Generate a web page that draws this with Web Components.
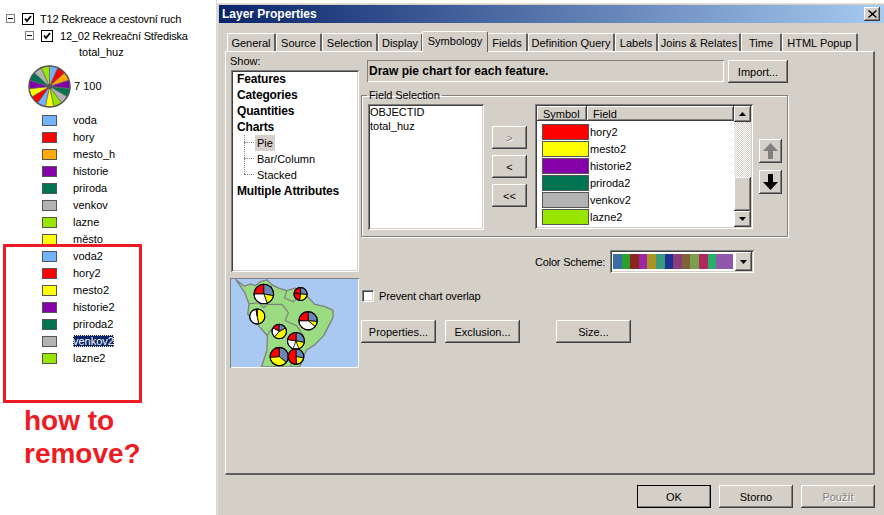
<!DOCTYPE html>
<html>
<head>
<meta charset="utf-8">
<title>Layer Properties</title>
<style>
  html, body { margin: 0; padding: 0; background: #fff; }
  body {
    display: flex;
    width: 884px;
    height: 515px;
    overflow: hidden;
    font: 11px "Liberation Sans", Arial, sans-serif;
    color: #000;
  }
</style>
</head>
<body>
<toc-panel>
  <tree-row depth="0" label="T12 Rekreace a cestovní ruch"></tree-row>
  <tree-row depth="1" label="12_02 Rekreační Střediska"></tree-row>
  <div style="height:17px;line-height:17px;padding-left:79px">total_huz</div>
  <pie-legend label="7 100"></pie-legend>
  <legend-row color="#73b2ff">voda</legend-row>
  <legend-row color="#ff0000">hory</legend-row>
  <legend-row color="#ffaa00">mesto_h</legend-row>
  <legend-row color="#8400a8">historie</legend-row>
  <legend-row color="#007350">priroda</legend-row>
  <legend-row color="#b2b2b2">venkov</legend-row>
  <legend-row color="#98e600">lazne</legend-row>
  <legend-row color="#ffff00">město</legend-row>
  <legend-row color="#73b2ff">voda2</legend-row>
  <legend-row color="#ff0000">hory2</legend-row>
  <legend-row color="#ffff00">mesto2</legend-row>
  <legend-row color="#8400a8">historie2</legend-row>
  <legend-row color="#007350">priroda2</legend-row>
  <legend-row color="#b2b2b2" selected>venkov2</legend-row>
  <legend-row color="#98e600">lazne2</legend-row>
  <red-note slot="note"></red-note>
</toc-panel>
<layer-dialog></layer-dialog>

<script>
const bevel = `
  box-shadow: inset -1px -1px #404040, inset 1px 1px #fff, inset -2px -2px #808080, inset 2px 2px #d4d0c8;
  background: #d4d0c8;`;
const sunken = `
  box-shadow: inset 1px 1px #808080, inset -1px -1px #fff, inset 2px 2px #404040, inset -2px -2px #d4d0c8;`;

function define(name, html, init) {
  const tpl = document.createElement('template');
  tpl.innerHTML = html;
  customElements.define(name, class extends HTMLElement {
    constructor() {
      super();
      this.attachShadow({ mode: 'open' });
      this.shadowRoot.appendChild(tpl.content.cloneNode(true));
    }
    connectedCallback() {
      if (init) init(this, this.shadowRoot);
    }
  });
}

/* ---- left table of contents ---- */
define('toc-panel', `
<style>
  :host { display: block; position: relative; width: 217px; height: 515px; flex: none;
          box-sizing: border-box; padding-top: 10px; border-right: 1px solid #d8d8d8; }
</style>
<slot></slot>
<slot name="note"></slot>`);

define('tree-row', `
<style>
  :host { display: flex; align-items: center; height: 17px; letter-spacing: -.2px; }
  .tog { width: 7px; height: 7px; border: 1px solid #808080; display: flex; align-items: center;
         justify-content: center; margin-right: 7px; flex: none; }
  .tog i { width: 5px; height: 1px; background: #000; }
  .chk { width: 10px; height: 10px; border: 1px solid #000; margin-right: 6px; flex: none; }
  .chk svg { display: block; }
</style>
<span class="tog"><i></i></span>
<span class="chk"><svg width="10" height="10" viewBox="0 0 10 10"><path d="M2 4.5 4 7 8 2" fill="none" stroke="#000" stroke-width="1.8"/></svg></span>
<span class="txt"></span>`, (el, root) => {
  root.querySelector('.txt').textContent = el.getAttribute('label');
  const d = el.getAttribute('depth') === '1';
  el.style.paddingLeft = d ? '25px' : '6px';
  if (d) root.querySelector('.chk').style.marginRight = '7px';
});

define('pie-legend', `
<style>
  :host { display: flex; align-items: center; height: 51px; padding-left: 28px; }
  svg { display: block; margin-right: 3px; }
  .txt { margin-bottom: 2px; }
</style>
<svg width="43" height="43" viewBox="-21.5 -21.5 43 43"></svg>
<span class="txt"></span>`, (el, root) => {
  root.querySelector('.txt').textContent = el.getAttribute('label');
  const cols = ['#73b2ff','#ff0000','#ffaa00','#8400a8','#007350','#b2b2b2','#98e600','#ffff00',
                '#73b2ff','#ff0000','#ffff00','#8400a8','#007350','#b2b2b2','#98e600'];
  const r = 20.5;
  let s = '';
  cols.forEach((c, i) => {
    const a0 = i * 24 * Math.PI / 180, a1 = (i + 1) * 24 * Math.PI / 180;
    s += `<path d="M0 0L${(r * Math.sin(a0)).toFixed(2)} ${(-r * Math.cos(a0)).toFixed(2)}A${r} ${r} 0 0 1 ${(r * Math.sin(a1)).toFixed(2)} ${(-r * Math.cos(a1)).toFixed(2)}Z" fill="${c}" stroke="#666" stroke-width=".7"/>`;
  });
  s += `<circle r="${r}" fill="none" stroke="#555" stroke-width="1.4"/><circle r="2.6" fill="#555"/>`;
  root.querySelector('svg').innerHTML = s;
});

define('legend-row', `
<style>
  :host { display: flex; align-items: center; height: 17px; padding-left: 42px; }
  .sw { width: 13px; height: 9px; border: 1px solid #555; margin-right: 16px; flex: none; }
  .t { margin-bottom: 2px; }
  :host([selected]) .t { background: #0a246a; color: #fff; outline: 1px dotted #ffe9a8; outline-offset: -1px; }
</style>
<span class="sw"></span><span class="t"><slot></slot></span>`, (el, root) => {
  root.querySelector('.sw').style.background = el.getAttribute('color');
});

define('red-note', `
<style>
  :host { position: absolute; left: 3px; top: 244px; display: flex; flex-direction: column; }
  .box { width: 133px; height: 153px; border: 3px solid #ed1c24; }
  .say { margin: 1px 0 0 21px; color: #ed1c24; font: bold 28px/33px "Liberation Sans", Arial, sans-serif; }
</style>
<div class="box"></div>
<div class="say">how to<br>remove?</div>`);

/* ---- small win32 controls ---- */
define('win-button', `
<style>
  :host { display: flex; align-items: center; justify-content: center; box-sizing: border-box; flex: none;
          ${bevel} height: 23px; width: 75px; }
  :host([disabled]) { color: #808080; text-shadow: 1px 1px #fff; }
  :host([default]) { outline: 1px solid #000; outline-offset: -1px; }
</style>
<slot></slot>`);

define('dlg-tab', `
<style>
  :host { display: flex; align-items: center; justify-content: center; box-sizing: border-box; flex: none;
          height: 18px; background: #d4d0c8; border: 1px solid #fff; border-bottom: 0;
          border-right: 2px solid #606060; border-radius: 2px 2px 0 0; }
  :host([active]) { height: 21px; margin: 0 -1px -1px -1px; padding-bottom: 2px; position: relative; z-index: 1;
          border-right: 1px solid #606060; }
</style>
<slot></slot>`);

define('show-list', `
<style>
  :host { display: block; box-sizing: border-box; width: 128px; height: 202px; margin-left: 1px; background: #fff;
          ${sunken} padding: 1px 0 0 6px; }
  div { height: 16px; line-height: 16px; }
  .h { font-weight: bold; font-size: 12px; letter-spacing: -.15px; }
  .s { display: flex; padding-left: 7px; background: repeating-linear-gradient(#808080 0 1px, transparent 1px 2px) 7px 0/1px 100% no-repeat; }
  .s.end { background-size: 1px 8px; }
  .s::before { content: ""; width: 10px; height: 8px; flex: none; border-bottom: 1px dotted #808080; box-sizing: border-box; margin-right: 1px; }
  .s span { padding: 0 2px; }
  .on span { background: #d4d0c8; }
</style>
<div class="h">Features</div>
<div class="h">Categories</div>
<div class="h">Quantities</div>
<div class="h">Charts</div>
<div class="s on"><span>Pie</span></div>
<div class="s"><span>Bar/Column</span></div>
<div class="s end"><span>Stacked</span></div>
<div class="h">Multiple Attributes</div>`);

define('mini-map', `
<style>
  :host { display: block; width: 129px; height: 90px; box-sizing: border-box; ${sunken} padding: 1px; background: #fff; }
  svg { display: block; width: 127px; height: 88px; }
</style>
<svg viewBox="15 22 387 270" preserveAspectRatio="none"></svg>`, (el, root) => {
  const pie = (x, y, r, parts) => {
    let s = `<circle cx="${x}" cy="${y}" r="${r}" fill="#fff"/>`;
    parts.forEach(([c, a0, a1]) => {
      const p = a => `${(x + r * Math.sin(a * Math.PI / 180)).toFixed(1)} ${(y - r * Math.cos(a * Math.PI / 180)).toFixed(1)}`;
      s += `<path d="M${x} ${y}L${p(a0)}A${r} ${r} 0 ${a1 - a0 > 180 ? 1 : 0} 1 ${p(a1)}Z" fill="${c}" stroke="#000" stroke-width="2.5"/>`;
    });
    return s + `<circle cx="${x}" cy="${y}" r="${r}" fill="none" stroke="#000" stroke-width="3.5"/>`;
  };
  const R = '#ff0000', B = '#6a86b8', Y = '#ffff00', W = '#ffffff';
  root.querySelector('svg').innerHTML = `
    <rect x="15" y="22" width="387" height="270" fill="#a9c9f2"/>
    <path d="M30 24 55 44 75 38 90 42 105 30 125 25 140 40 160 50 185 58 210 50 232 62 250 78 270 100 300 106 326 118 326 140 308 175 298 195 270 224 245 240 236 262 224 292 108 292 124 242 126 196 96 162 66 130 70 98 56 62Z"
          fill="#9bdc82" stroke="#7f7f7f" stroke-width="4" stroke-linejoin="round"/>
    <path d="M70 98 100 95 115 110 125 100 170 100 190 125 180 150 215 165 235 195 210 240 196 292M125 196 135 180 165 160M185 58 178 80 205 92 232 62M140 40 130 70" fill="none" stroke="#7f7f7f" stroke-width="3.5"/>
    ${pie(115, 68, 30, [[R, 270, 360], [B, 0, 100], [Y, 100, 160], [W, 160, 270]])}
    ${pie(227, 68, 20, [[R, 280, 360], [B, 0, 95], [Y, 95, 190], [R, 190, 280]])}
    ${pie(95, 137, 23, [[Y, 0, 170], [W, 170, 350], [R, 350, 360]])}
    ${pie(250, 150, 28, [[B, 0, 95], [Y, 95, 130], [W, 130, 270], [R, 270, 360]])}
    ${pie(162, 183, 22, [[R, 300, 360], [W, 220, 300], [Y, 60, 220], [B, 0, 60]])}
    ${pie(213, 212, 26, [[B, 0, 100], [Y, 100, 160], [W, 200, 280], [R, 280, 360]])}
    ${pie(162, 260, 28, [[B, 0, 130], [Y, 130, 265], [R, 265, 360]])}
    ${pie(213, 260, 24, [[B, 0, 100], [Y, 100, 175], [R, 175, 360]])}`;
});

define('sunken-list', `
<style>
  :host { display: block; box-sizing: border-box; width: 116px; height: 126px; flex: none; background: #fff; ${sunken} padding: 1px 2px; }
  ::slotted(div) { height: 14px; line-height: 14px; }
</style>
<slot></slot>`);

define('sym-table', `
<style>
  :host { display: flex; box-sizing: border-box; width: 218px; height: 125px; flex: none; background: #fff; ${sunken} padding: 2px; }
  .main { flex: 1; min-width: 0; }
  .head { display: flex; height: 15px; }
  .head div { ${bevel} display: flex; align-items: center; padding-left: 6px; box-sizing: border-box; }
  .rows { padding-top: 2px; }
  .row { display: flex; align-items: center; height: 17px; padding-left: 5px; }
  .row i { width: 47px; height: 16px; box-sizing: border-box; border: 1px solid #555; flex: none; margin-right: 1px; }
  .bar { width: 17px; display: flex; flex-direction: column; flex: none; }
  .btn { ${bevel} height: 16px; display: flex; align-items: center; justify-content: center; flex: none; }
  .track { flex: 1; background: repeating-conic-gradient(#d4d0c8 0 25%, #fff 0 50%) 0 0/2px 2px; }
  .thumb { ${bevel} height: 34px; flex: none; }
</style>
<div class="main">
  <div class="head"><div style="width:50px">Symbol</div><div style="flex:1">Field</div></div>
  <div class="rows"></div>
</div>
<div class="bar">
  <div class="btn"><svg width="7" height="4"><path d="M3.5 0 7 4H0Z"/></svg></div>
  <div class="track"></div>
  <div class="thumb"></div>
  <div class="btn"><svg width="7" height="4"><path d="M0 0H7L3.5 4Z"/></svg></div>
</div>`, (el, root) => {
  const data = [['#ff0000','hory2'],['#ffff00','mesto2'],['#8400a8','historie2'],['#007350','priroda2'],['#b2b2b2','venkov2'],['#98e600','lazne2']];
  root.querySelector('.rows').innerHTML = data.map(([c, t]) => `<div class="row"><i style="background:${c}"></i><span>${t}</span></div>`).join('');
});

define('color-ramp', `
<style>
  :host { display: flex; box-sizing: border-box; width: 144px; height: 23px; flex: none; background: #fff; ${sunken} padding: 2px; }
  .ramp { flex: 1; display: flex; padding: 2px 2px 2px 1px; }
  .ramp i { flex: 1; }
  .ramp i:last-child { flex: 2; }
  .btn { ${bevel} width: 17px; display: flex; align-items: center; justify-content: center; }
</style>
<div class="ramp"></div>
<div class="btn"><svg width="7" height="4"><path d="M0 0H7L3.5 4Z"/></svg></div>`, (el, root) => {
  const cols = ['#3a6ea5','#2ca02c','#8b2520','#9c27a0','#ab9322','#3a9a7e','#1f2f92','#8a3d7a','#80613a','#7aa04e','#b0285c','#28b06a','#8f58ad'];
  root.querySelector('.ramp').innerHTML = cols.map(c => `<i style="background:${c}"></i>`).join('');
});

/* ---- dialog ---- */
define('layer-dialog', `
<style>
  :host { display: flex; flex-direction: column; flex: 1; min-width: 0; box-sizing: border-box; height: 512px;
          margin-top: 3px; background: #d4d0c8; border-top: 1px solid #e4e1da; border-left: 1px solid #e4e1da; padding: 1px 0 0 1px; }
  .title { height: 18px; flex: none; display: flex; align-items: center; justify-content: space-between; padding: 0 4px 0 3px;
           background: linear-gradient(90deg, #0a246a, #a6caf0); color: #fff; font-weight: bold; font-size: 12px; }
  .x { ${bevel} width: 16px; height: 14px; display: flex; align-items: center; justify-content: center; }
  .tabs { display: flex; padding: 11px 0 0 8px; height: 18px; flex: none; align-items: flex-end; margin-top: -1px; position: relative; }
  .panel { box-sizing: border-box; flex: none; margin-left: 6px; width: 650px; height: 424px; padding: 3px 0 0 4px;
           border: 1px solid #fff; border-right: 2px solid #606060; border-bottom: 2px solid #606060; display: flex; gap: 3px; }
  .left { width: 128px; flex: none; display: flex; flex-direction: column; }
  .left label { height: 15px; line-height: 12px; }
  .left mini-map { margin-top: 6px; }
  .right { width: 427px; flex: none; padding-top: 5px; }
  .top { display: flex; margin-left: 6px; gap: 4px; }
  .msg { flex: 1; height: 22px; box-sizing: border-box; display: flex; align-items: center; padding-left: 2px; font-weight: bold; font-size: 12px;
         box-shadow: inset 1px 1px #808080, inset -1px -1px #fff; }
  fieldset { margin: 5px 0 0; padding: 2px 4px 5px 6px; border: 1px solid #808080; box-shadow: 1px 1px #fff, inset 1px 1px #fff;
             height: 149px; box-sizing: border-box; min-inline-size: 0; }
  legend { margin-left: -1px; padding: 0 2px; line-height: 14px; letter-spacing: -.1px; }
  .fs { display: flex; }
  .mid { display: flex; flex-direction: column; gap: 6px; padding-top: 22px; margin: 0 8px; }
  .arrows { display: flex; flex-direction: column; gap: 7px; padding-top: 35px; margin-left: 6px; }
  .scheme { display: flex; align-items: center; margin: 13px 0 0 174px; gap: 5px; letter-spacing: -.2px; }
  .prevent { display: flex; align-items: center; margin-top: 17px; margin-left: 1px; gap: 5px; height: 12px; letter-spacing: -.15px; }
  .prevent i { width: 10px; height: 10px; background: #fff; box-shadow: inset 1px 1px #404040, inset -1px -1px #d4d0c8; border: 1px solid #808080; border-right-color: #fff; border-bottom-color: #fff; flex: none; }
  .acts { display: flex; margin-top: 18px; gap: 9px; }
  .foot { display: flex; justify-content: flex-end; gap: 8px; padding: 10px 9px 0 0; }
  .foot win-button { width: 74px; }
</style>
<div class="title"><span>Layer Properties</span><span class="x"><svg width="9" height="8" viewBox="0 0 9 8"><path d="M1 0 4.5 3 8 0 9 1 5.5 4 9 7 8 8 4.5 5 1 8 0 7 3.5 4 0 1Z"/></svg></span></div>
<div class="tabs">
  <dlg-tab style="width:49px">General</dlg-tab>
  <dlg-tab style="width:46px">Source</dlg-tab>
  <dlg-tab style="width:56px">Selection</dlg-tab>
  <dlg-tab style="width:45px">Display</dlg-tab>
  <dlg-tab active style="width:66px">Symbology</dlg-tab>
  <dlg-tab style="width:41px">Fields</dlg-tab>
  <dlg-tab style="width:87px">Definition Query</dlg-tab>
  <dlg-tab style="width:43px">Labels</dlg-tab>
  <dlg-tab style="width:83px">Joins &amp; Relates</dlg-tab>
  <dlg-tab style="width:41px">Time</dlg-tab>
  <dlg-tab style="width:76px">HTML Popup</dlg-tab>
</div>
<div class="panel">
  <div class="left">
    <label>Show:</label>
    <show-list></show-list>
    <mini-map></mini-map>
  </div>
  <div class="right">
    <div class="top"><div class="msg">Draw pie chart for each feature.</div><win-button style="width:60px">Import...</win-button></div>
    <fieldset>
      <legend>Field Selection</legend>
      <div class="fs">
        <sunken-list><div>OBJECTID</div><div>total_huz</div></sunken-list>
        <div class="mid">
          <win-button disabled style="width:35px">&gt;</win-button>
          <win-button style="width:35px">&lt;</win-button>
          <win-button style="width:35px">&lt;&lt;</win-button>
        </div>
        <sym-table></sym-table>
        <div class="arrows">
          <win-button style="width:23px;height:24px"><svg width="17" height="18" viewBox="0 0 17 18"><path d="M8.5 1 16 9H11V17H6V9H1Z" fill="#808080"/></svg></win-button>
          <win-button style="width:23px;height:24px"><svg width="17" height="18" viewBox="0 0 17 18"><path d="M6 1H11V9H16L8.5 17 1 9H6Z" fill="#000"/></svg></win-button>
        </div>
      </div>
    </fieldset>
    <div class="scheme"><span>Color Scheme:</span><color-ramp></color-ramp></div>
    <div class="prevent"><i></i><span>Prevent chart overlap</span></div>
    <div class="acts">
      <win-button>Properties...</win-button>
      <win-button>Exclusion...</win-button>
      <win-button style="margin-left:27px">Size...</win-button>
    </div>
  </div>
</div>
<div class="foot">
  <win-button default>OK</win-button>
  <win-button>Storno</win-button>
  <win-button disabled>Použít</win-button>
</div>`);
</script>
</body>
</html>
